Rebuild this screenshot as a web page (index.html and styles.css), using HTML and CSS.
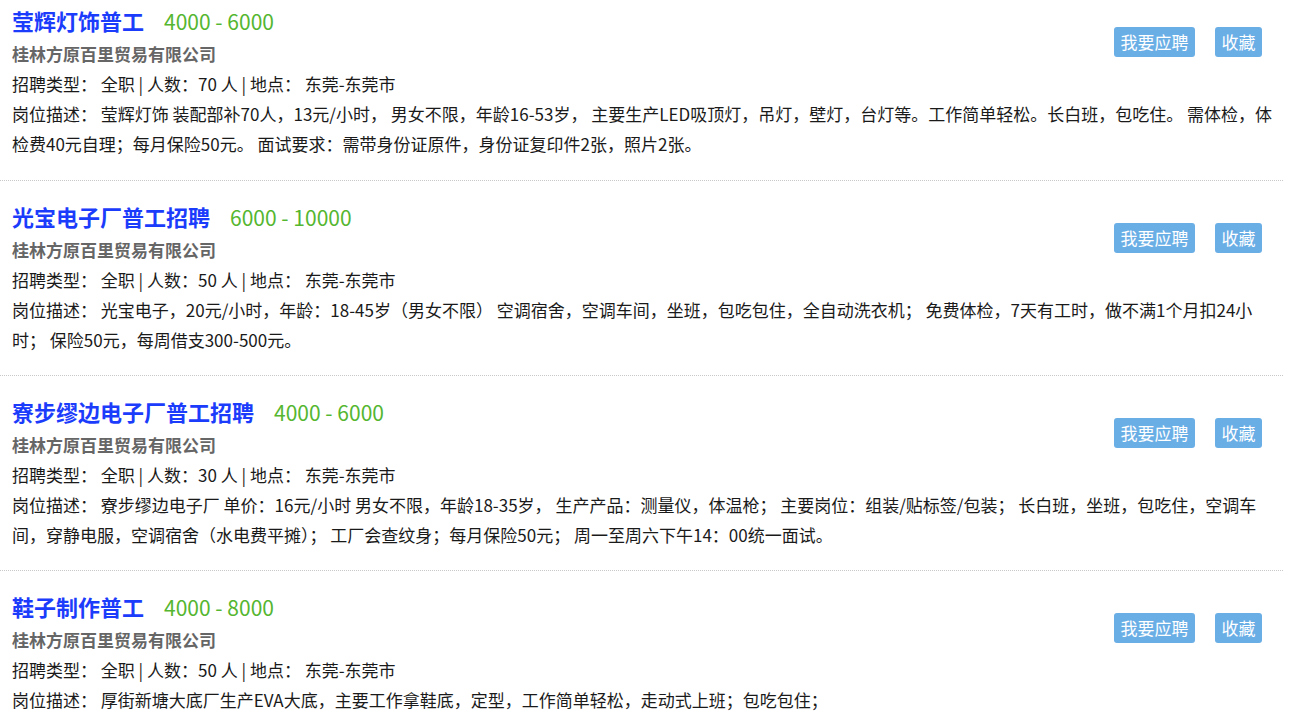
FILE: index.html
```html
<!DOCTYPE html>
<html lang="zh-CN">
<head>
<meta charset="utf-8">
<title>招聘列表</title>
<link rel="stylesheet" href="styles.css">
</head>
<body>
<div class="job-list">
  <div class="job">
    <div class="actions"><a class="btn">我要应聘</a><a class="btn">收藏</a></div>
    <div class="title-row"><span class="title">莹辉灯饰普工</span><span class="salary">4000 - 6000</span></div>
    <div class="company">桂林方原百里贸易有限公司</div>
    <div class="meta">招聘类型： 全职 | 人数：70 人 | 地点： 东莞-东莞市</div>
    <div class="desc">岗位描述： 莹辉灯饰 装配部补70人，13元/小时， 男女不限，年龄16-53岁， 主要生产LED吸顶灯，吊灯，壁灯，台灯等。工作简单轻松。长白班，包吃住。 需体检，体检费40元自理；每月保险50元。 面试要求：需带身份证原件，身份证复印件2张，照片2张。</div>
  </div>
  <div class="job">
    <div class="actions"><a class="btn">我要应聘</a><a class="btn">收藏</a></div>
    <div class="title-row"><span class="title">光宝电子厂普工招聘</span><span class="salary">6000 - 10000</span></div>
    <div class="company">桂林方原百里贸易有限公司</div>
    <div class="meta">招聘类型： 全职 | 人数：50 人 | 地点： 东莞-东莞市</div>
    <div class="desc">岗位描述： 光宝电子，20元/小时，年龄：18-45岁（男女不限） 空调宿舍，空调车间，坐班，包吃包住，全自动洗衣机； 免费体检，7天有工时，做不满1个月扣24小时； 保险50元，每周借支300-500元。</div>
  </div>
  <div class="job">
    <div class="actions"><a class="btn">我要应聘</a><a class="btn">收藏</a></div>
    <div class="title-row"><span class="title">寮步缪边电子厂普工招聘</span><span class="salary">4000 - 6000</span></div>
    <div class="company">桂林方原百里贸易有限公司</div>
    <div class="meta">招聘类型： 全职 | 人数：30 人 | 地点： 东莞-东莞市</div>
    <div class="desc">岗位描述： 寮步缪边电子厂 单价：16元/小时 男女不限，年龄18-35岁， 生产产品：测量仪，体温枪； 主要岗位：组装/贴标签/包装； 长白班，坐班，包吃住，空调车间，穿静电服，空调宿舍（水电费平摊）； 工厂会查纹身；每月保险50元； 周一至周六下午14：00统一面试。</div>
  </div>
  <div class="job">
    <div class="actions"><a class="btn">我要应聘</a><a class="btn">收藏</a></div>
    <div class="title-row"><span class="title">鞋子制作普工</span><span class="salary">4000 - 8000</span></div>
    <div class="company">桂林方原百里贸易有限公司</div>
    <div class="meta">招聘类型： 全职 | 人数：50 人 | 地点： 东莞-东莞市</div>
    <div class="desc">岗位描述： 厚街新塘大底厂生产EVA大底，主要工作拿鞋底，定型，工作简单轻松，走动式上班；包吃包住；</div>
  </div>
</div>
</body>
</html>
```
FILE: styles.css
```css
html, body {
  margin: 0;
  padding: 0;
  background: #fff;
}

body {
  font-family: "Noto Sans CJK SC", "Liberation Sans", sans-serif;
  font-size: 17px;
  color: #1a1a1a;
}

.job-list {
  width: 1283px;
}

.job {
  padding: 22px 8px 20px 12px;
  border-bottom: 1px dotted #c8c8c8;
}

.job:first-child {
  padding-top: 7px;
  padding-bottom: 21px;
}

.actions {
  float: right;
  display: flex;
  gap: 20px;
  margin-top: 20px;
  margin-right: 13px;
}

.btn {
  display: block;
  height: 30px;
  line-height: 30px;
  padding: 0 6.5px;
  background: #6aaee6;
  color: #fff;
  border-radius: 3px;
  font-size: 17px;
  cursor: pointer;
}

.title-row {
  height: 26px;
  padding-bottom: 6px;
  line-height: 26px;
  display: flex;
  align-items: baseline;
  gap: 20px;
}

.title {
  font-size: 22px;
  font-weight: bold;
  color: #1c3cfb;
}

.salary {
  font-size: 21px;
  color: #55b630;
}

.company {
  line-height: 30px;
  font-weight: bold;
  color: #666;
}

.meta {
  line-height: 30px;
}

.desc {
  line-height: 30px;
}
```
